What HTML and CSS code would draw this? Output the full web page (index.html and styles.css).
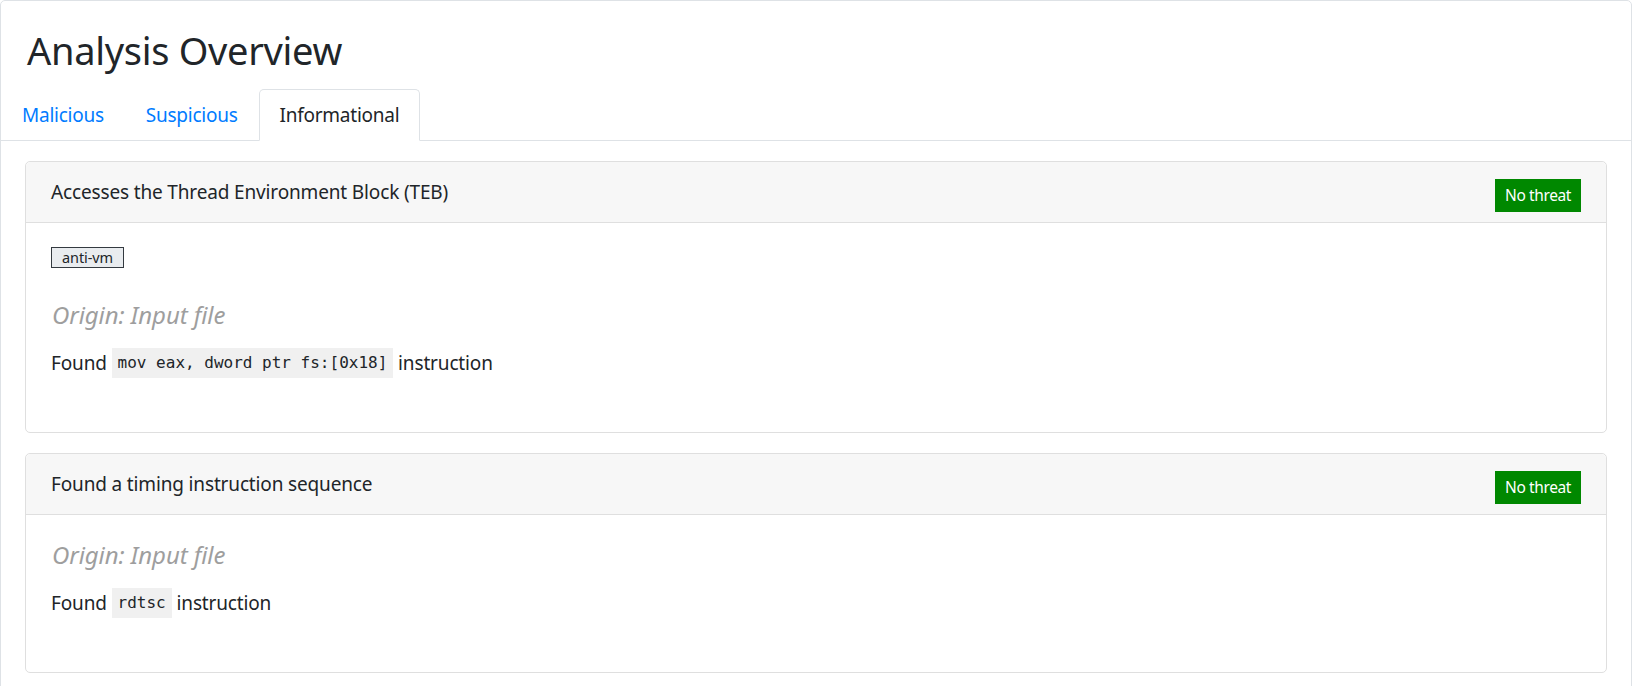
FILE: index.html
```html
<!DOCTYPE html>
<html lang="en">
  <head>
    <meta charset="UTF-8" />
    <meta name="viewport" content="width=device-width, initial-scale=1.0" />
    <title>Analysis Overview</title>
    <link rel="stylesheet" href="styles.css">
  </head>
  <body>
    <div class="overview">
      <h1 class="overview-title">Analysis Overview</h1>

      <ul class="tabs">
        <li><a class="tab" href="#malicious">Malicious</a></li>
        <li><a class="tab" href="#suspicious">Suspicious</a></li>
        <li><a class="tab active" href="#informational">Informational</a></li>
      </ul>

      <!-- Informational findings -->
      <div class="tab-content" id="informational">
        <div class="finding">
          <div class="finding-header">
            <span class="finding-title">Accesses the Thread Environment Block (TEB)</span>
            <span class="badge-ok">No threat</span>
          </div>
          <div class="finding-body">
            <div class="tags"><span class="tag">anti-vm</span></div>
            <h5 class="origin">Origin: Input file</h5>
            <p class="detail">Found <code>mov eax, dword ptr fs:[0x18]</code> instruction</p>
          </div>
        </div>

        <div class="finding">
          <div class="finding-header">
            <span class="finding-title">Found a timing instruction sequence</span>
            <span class="badge-ok">No threat</span>
          </div>
          <div class="finding-body">
            <h5 class="origin">Origin: Input file</h5>
            <p class="detail">Found <code>rdtsc</code> instruction</p>
          </div>
        </div>
      </div>
    </div>
  </body>
</html>
```

FILE: styles.css
```css
body {
  margin: 0;
  font-family: "Noto Sans", "Open Sans", sans-serif;
  font-size: 19px;
  letter-spacing: -0.15px;
  line-height: 1.5;
  color: #212529;
  background-color: #fff;
}

.overview {
  border: 1px solid #dee2e6;
  border-radius: 5px 5px 0 0;
  min-height: 720px;
}

.overview-title {
  margin: 0;
  padding: 25px 25px 15px 26px;
  font-size: 38px;
  font-weight: 400;
  letter-spacing: -0.3px;
  line-height: 48px;
}

.tabs {
  display: flex;
  list-style: none;
  margin: 0;
  padding: 0;
  border-bottom: 1px solid #dee2e6;
}

.tab {
  display: block;
  padding: 10px 20px;
  margin-bottom: -1px;
  border: 1px solid transparent;
  border-radius: 5px 5px 0 0;
  color: #007bff;
  letter-spacing: -0.25px;
  line-height: 30px;
  text-decoration: none;
}

.tab.active {
  color: #212529;
  background-color: #fff;
  border-color: #dee2e6 #dee2e6 #fff;
}

.tab-content {
  padding: 20px 24px;
}

.finding {
  border: 1px solid #dfdfdf;
  border-radius: 5px;
  margin-bottom: 20px;
}

.finding-header {
  display: flex;
  justify-content: space-between;
  align-items: flex-start;
  padding: 15px 25px;
  background-color: #f7f7f7;
  border-bottom: 1px solid #dfdfdf;
  border-radius: 5px 5px 0 0;
  line-height: 30px;
}

.badge-ok {
  margin: 2px 0 -5px;
  padding: 5px 10px;
  background-color: #008800;
  color: #fff;
  font-size: 15.5px;
  letter-spacing: -0.4px;
  line-height: 23px;
}

.finding-body {
  padding: 25px 25px 54px;
}

.tags {
  display: flex;
  margin: -1px 0 32px;
}

.tag {
  padding: 0 10px;
  border: 1px solid #343a40;
  background-color: #e9ecef;
  font-size: 14.5px;
  letter-spacing: -0.1px;
  line-height: 19px;
}

.origin {
  margin: 0 0 18px 1px;
  color: #9e9e9e;
  font-size: 24px;
  font-style: italic;
  font-weight: 400;
  letter-spacing: -0.1px;
  line-height: 30px;
}

.detail {
  margin: 0;
  line-height: 30px;
}

code {
  display: inline-block;
  vertical-align: top;
  padding: 0 6px;
  background-color: #f0f0f0;
  font-family: "DejaVu Sans Mono", monospace;
  font-size: 16px;
  letter-spacing: 0;
  line-height: 30px;
}
```
